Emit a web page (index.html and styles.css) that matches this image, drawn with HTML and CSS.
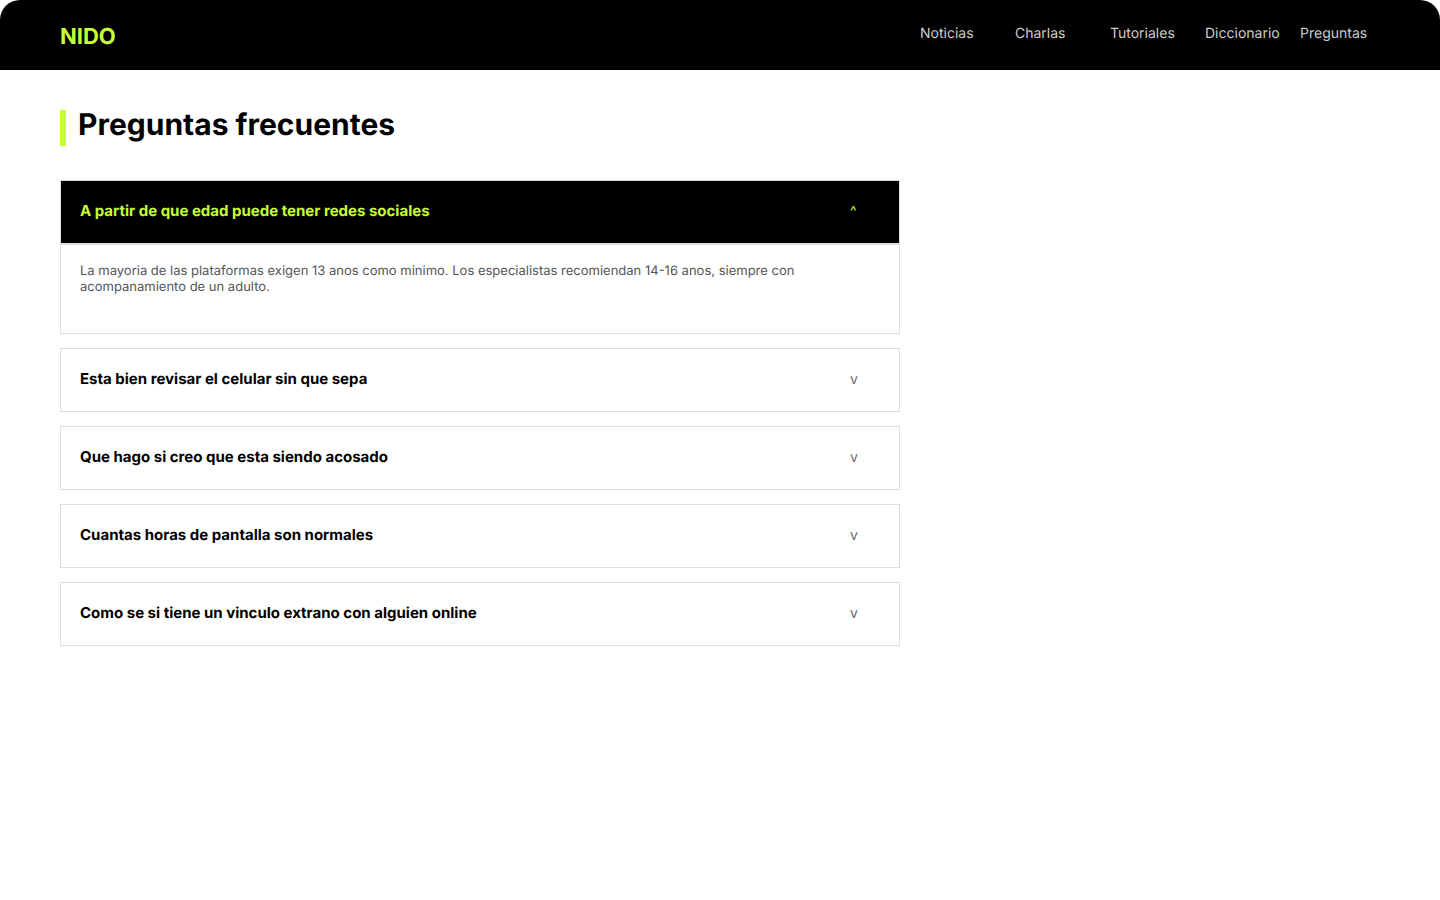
FILE: index.html
```html
<!DOCTYPE html>
<html lang="es">

<head>
    <meta charset="UTF-8">
    <meta name="viewport" content="width=device-width, initial-scale=1">
    <title>NIDO - Preguntas frecuentes</title>
    <link rel="stylesheet" href="styles.css">
</head>

<body>
    <header class="header">
        <a class="logo" href="#">NIDO</a>
        <nav class="nav">
            <a href="#">Noticias</a>
            <a href="#">Charlas</a>
            <a href="#">Tutoriales</a>
            <a href="#">Diccionario</a>
            <a href="#">Preguntas</a>
        </nav>
    </header>

    <main class="main">
        <h1 class="title">Preguntas frecuentes</h1>

        <div class="faq">
            <section class="item open">
                <h2><button class="question" type="button" aria-expanded="true" aria-controls="r1"><span>A partir de que edad puede tener redes sociales</span><span class="arrow" aria-hidden="true"></span></button></h2>
                <div class="answer" id="r1">
                    <p>La mayoria de las plataformas exigen 13 anos como minimo. Los especialistas recomiendan 14-16 anos, siempre con acompanamiento de un adulto.</p>
                </div>
            </section>
            <section class="item">
                <h2><button class="question" type="button" aria-expanded="false"><span>Esta bien revisar el celular sin que sepa</span><span class="arrow" aria-hidden="true"></span></button></h2>
            </section>
            <section class="item">
                <h2><button class="question" type="button" aria-expanded="false"><span>Que hago si creo que esta siendo acosado</span><span class="arrow" aria-hidden="true"></span></button></h2>
            </section>
            <section class="item">
                <h2><button class="question" type="button" aria-expanded="false"><span>Cuantas horas de pantalla son normales</span><span class="arrow" aria-hidden="true"></span></button></h2>
            </section>
            <section class="item">
                <h2><button class="question" type="button" aria-expanded="false"><span>Como se si tiene un vinculo extrano con alguien online</span><span class="arrow" aria-hidden="true"></span></button></h2>
            </section>
        </div>
    </main>

    <script src="faq.js"></script>
</body>

</html>
```

FILE: styles.css
```css
* {
    margin: 0;
    padding: 0;
    box-sizing: border-box;
}

body {
    background: #fff;
    color: #000;
    font-family: Inter, "Liberation Sans", sans-serif;
    text-rendering: geometricPrecision;
}

a {
    text-decoration: none;
}

/* cabecera */
.header {
    display: flex;
    justify-content: space-between;
    align-items: flex-start;
    padding: 23px 45px 19px 60px;
    background: #000;
    border-radius: 20px 20px 0 0;
}

.logo {
    color: #c6ff33;
    font-size: 22px;
    font-weight: 700;
    line-height: 28px;
}

.nav {
    display: grid;
    grid-template-columns: repeat(5, 95px);
    padding-top: 2px;
}

.nav a {
    color: #ccc;
    font-size: 14px;
    line-height: 18px;
}

.main {
    padding: 40px 60px;
}

.title {
    padding: 0 0 6px 12px;
    border-left: 6px solid #c6ff33;
    font-size: 30px;
    font-weight: 700;
    line-height: 30px;
}

/* preguntas */
.faq {
    display: flex;
    flex-direction: column;
    gap: 14px;
    max-width: 840px;
    margin-top: 34px;
}

.question {
    display: flex;
    justify-content: space-between;
    align-items: flex-start;
    width: 100%;
    padding: 20px 19px;
    background: #fff;
    border: 1px solid #ddd;
    color: #000;
    font-family: inherit;
    font-size: 15px;
    font-weight: 700;
    line-height: 20px;
    text-align: left;
    text-rendering: inherit;
    cursor: pointer;
}

.arrow {
    flex: none;
    width: 30px;
    color: #666;
    font-size: 14px;
    font-weight: 400;
    line-height: 22px;
}

.arrow::before {
    content: "v";
}

.open .question {
    background: #000;
    color: #c6ff33;
}

.open .arrow {
    color: #c6ff33;
}

.open .arrow::before {
    content: "^";
}

.answer {
    display: none;
    padding: 18px 79px 38px 19px;
    border: 1px solid #ddd;
    color: #555;
    font-size: 13px;
    line-height: 16px;
}

.open .answer {
    display: block;
}
```

FILE: faq.js
```js
var questions = document.querySelectorAll('.question');

// abre o cierra la respuesta
questions.forEach(function (btn) {
    btn.addEventListener('click', function () {
        var item = btn.closest('.item');
        var open = item.classList.toggle('open');
        btn.setAttribute('aria-expanded', open);
    });
});
```
